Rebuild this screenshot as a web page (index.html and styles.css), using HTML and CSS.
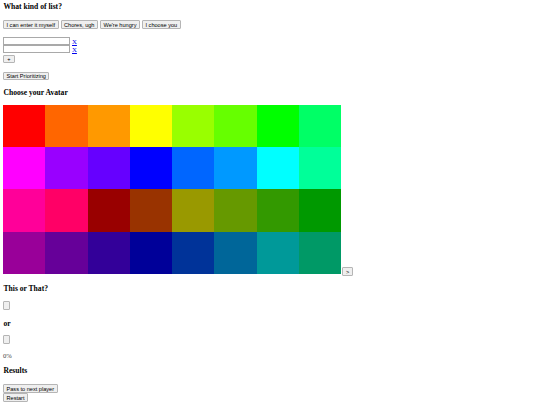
FILE: index.html
```html
<!DOCTYPE html>
<html>
<head>
<meta charset="utf-8">
<link rel="stylesheet" href="styles.css">
</head>
<body>
<h3 class="heading heading-first">What kind of list?</h3>
<div class="choices">
  <button class="btn">I can enter it myself</button>
  <button class="btn">Chores, ugh</button>
  <button class="btn">We're hungry</button>
  <button class="btn">I choose you</button>
</div>
<div class="items">
  <div class="item-row"><input class="item-input" type="text"><a class="remove" href="#">X</a></div>
  <div class="item-row"><input class="item-input" type="text"><a class="remove" href="#">X</a></div>
</div>
<div class="add-row"><button class="btn">+</button></div>
<div class="start-row"><button class="btn">Start Prioritizing</button></div>
<h3 class="heading">Choose your Avatar</h3>
<div class="avatar-row">
  <div class="palette">
    <div class="swatch" style="background:#ff0000"></div>
    <div class="swatch" style="background:#ff6600"></div>
    <div class="swatch" style="background:#ff9900"></div>
    <div class="swatch" style="background:#ffff00"></div>
    <div class="swatch" style="background:#99ff00"></div>
    <div class="swatch" style="background:#66ff00"></div>
    <div class="swatch" style="background:#00ff00"></div>
    <div class="swatch" style="background:#00ff66"></div>
    <div class="swatch" style="background:#ff00ff"></div>
    <div class="swatch" style="background:#9900ff"></div>
    <div class="swatch" style="background:#6600ff"></div>
    <div class="swatch" style="background:#0000ff"></div>
    <div class="swatch" style="background:#0066ff"></div>
    <div class="swatch" style="background:#0099ff"></div>
    <div class="swatch" style="background:#00ffff"></div>
    <div class="swatch" style="background:#00ff99"></div>
    <div class="swatch" style="background:#ff0099"></div>
    <div class="swatch" style="background:#ff0066"></div>
    <div class="swatch" style="background:#990000"></div>
    <div class="swatch" style="background:#993300"></div>
    <div class="swatch" style="background:#999900"></div>
    <div class="swatch" style="background:#669900"></div>
    <div class="swatch" style="background:#339900"></div>
    <div class="swatch" style="background:#009900"></div>
    <div class="swatch" style="background:#990099"></div>
    <div class="swatch" style="background:#660099"></div>
    <div class="swatch" style="background:#330099"></div>
    <div class="swatch" style="background:#000099"></div>
    <div class="swatch" style="background:#003399"></div>
    <div class="swatch" style="background:#006699"></div>
    <div class="swatch" style="background:#009999"></div>
    <div class="swatch" style="background:#009966"></div>
  </div>
  <button class="btn btn-next">&gt;</button>
</div>
<h3 class="heading heading-this">This or That?</h3>
<div class="option-row"><button class="btn btn-empty"></button></div>
<h3 class="heading heading-or">or</h3>
<div class="option-row"><button class="btn btn-empty"></button></div>
<p class="progress">0%</p>
<h3 class="heading heading-results">Results</h3>
<div class="final-row"><button class="btn">Pass to next player</button></div>
<div class="final-row"><button class="btn">Restart</button></div>
</body>
</html>
```
FILE: styles.css
```css
html, body {
  background: #ffffff;
}
body {
  margin: 0;
  padding: 3.3px 3px 0 3px;
  font-family: "Liberation Serif", "Times New Roman", serif;
  font-size: 6.4px;
  line-height: 7.4px;
  color: #000;
}
.heading {
  font-size: 7.6px;
  line-height: 8.6px;
  font-weight: bold;
  margin: 0;
  padding-left: 0.5px;
}
.btn {
  font-family: "Liberation Sans", Arial, sans-serif;
  font-size: 5.6px;
  line-height: 6.2px;
  padding: 0.4px 2.5px;
  border: 1px solid #b5b5b5;
  border-radius: 1px;
  background: #efefef;
  color: #000;
  margin: 0;
  display: block;
}
.choices {
  display: flex;
  gap: 2px;
  margin-top: 8.6px;
}
.choices .btn {
  height: 8.4px;
  line-height: 6px;
  padding-top: 0.2px;
  padding-bottom: 0.2px;
}
.items {
  margin-top: 8.3px;
}
.item-row {
  display: flex;
  align-items: center;
  height: 8px;
  gap: 2px;
}
.item-input {
  width: 67px;
  height: 8px;
  box-sizing: border-box;
  border: 1px solid #a9a9a9;
  margin: 0;
  padding: 0;
  font-size: 5px;
}
.remove {
  color: #0000ee;
  font-size: 6.8px;
  line-height: 7px;
}
.add-row {
  margin-top: 2px;
}
.add-row .btn {
  padding: 0.2px 3.2px;
  height: 8px;
  line-height: 6px;
}
.start-row {
  margin-top: 8.7px;
}
.start-row .btn {
  height: 8.4px;
  line-height: 6px;
  padding-top: 0.2px;
  padding-bottom: 0.2px;
}
.start-row + .heading {
  margin-top: 8.6px;
}
.avatar-row {
  display: flex;
  align-items: flex-end;
  gap: 1px;
  margin-top: 7.4px;
}
.palette {
  display: grid;
  grid-template-columns: repeat(8, 42.25px);
  grid-auto-rows: 42.25px;
}
.btn-next {
  margin-bottom: -2px;
  padding: 0.2px 3px;
  height: 8.4px;
  line-height: 6px;
}
.heading-this {
  margin-top: 11px;
}
.option-row {
  margin-top: 7.2px;
}
.btn-empty {
  width: 7.2px;
  height: 9px;
}
.heading-or {
  margin-top: 10px;
}
.progress {
  margin: 7.2px 0 0 0;
  color: #444;
  font-size: 6.6px;
  line-height: 7.4px;
}
.heading-results {
  margin-top: 8.2px;
}
.heading-results + .final-row {
  margin-top: 8.5px;
}
.final-row .btn {
  height: 9px;
}
```
